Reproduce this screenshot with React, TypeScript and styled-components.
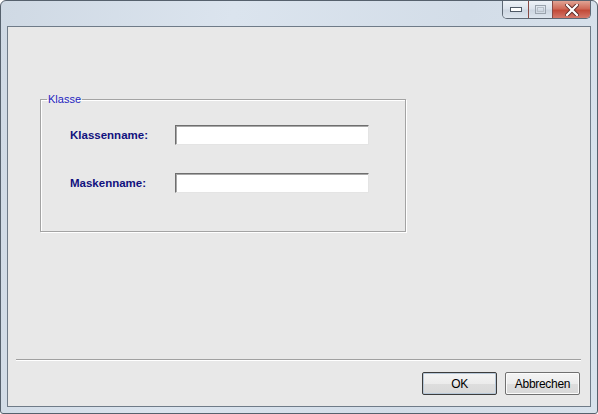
import React from "react";
import styled, { createGlobalStyle } from "styled-components";

const Global = createGlobalStyle`
  html, body { margin: 0; padding: 0; background: #ffffff; }
  body { font-family: "Liberation Sans", Arial, sans-serif; }
  * { box-sizing: border-box; }
`;

const Window = styled.div`
  width: 598px;
  height: 414px;
  border: 1px solid #56616d;
  border-radius: 6px 6px 3px 3px;
  background: linear-gradient(100deg, #cfd9e4 0%, #dbe4ee 35%, #d3dde8 70%, #d8e2ec 100%);
  padding: 0 6px 6px 6px;
  display: flex;
  flex-direction: column;
  overflow: hidden;
`;

const TitleBar = styled.div`
  height: 25px;
  display: flex;
  justify-content: flex-end;
  align-items: flex-start;
`;

const CaptionGroup = styled.div`
  display: flex;
  height: 18px;
  border: 1px solid #5e6874;
  border-top: none;
  border-radius: 0 0 5px 5px;
  overflow: hidden;
`;

const CaptionButton = styled.div<{ $close?: boolean; $w: number }>`
  width: ${(p) => p.$w}px;
  height: 100%;
  display: flex;
  align-items: center;
  justify-content: center;
  background: ${(p) =>
    p.$close
      ? "linear-gradient(180deg, #e1a494 0%, #cf6a58 45%, #c24a38 55%, #d4786a 100%)"
      : "linear-gradient(180deg, #eef2f7 0%, #dce3ec 45%, #cdd6e1 55%, #dde5ee 100%)"};
  & + & {
    border-left: 1px solid ${(p) => (p.$close ? "#8a4a44" : "#9aa6b3")};
  }
`;

const Client = styled.div`
  flex: 1;
  border: 1px solid #6f7b88;
  background: #e8e8e8;
  display: flex;
  flex-direction: column;
`;

const Content = styled.div`
  flex: 1;
  padding: 67px 0 0 32px;
`;

const GroupBox = styled.fieldset`
  margin: 0;
  width: 366px;
  height: 138px;
  border: 1px solid #a3a3a3;
  box-shadow: 1px 1px 0 #ffffff, inset 1px 1px 0 #ffffff;
  border-radius: 0;
  padding: 0;
`;

const Legend = styled.legend`
  padding: 0 1px;
  margin-left: 6px;
  font-size: 11px;
  color: #1f1fbf;
  line-height: 11px;
`;

const FormGrid = styled.div`
  display: grid;
  grid-template-columns: 105px 194px;
  row-gap: 28px;
  align-items: center;
  padding: 20px 0 0 29px;
`;

const Label = styled.label`
  font-weight: bold;
  font-size: 11.5px;
  color: #11117e;
`;

const Input = styled.div`
  height: 20px;
  background: #ffffff;
  border: 1px solid;
  border-color: #6e6e6e #e4e4e4 #e4e4e4 #6e6e6e;
  box-shadow: inset 1px 1px 0 #a8a8a8;
`;

const Footer = styled.div`
  padding: 0 10px 11px 8px;
  display: flex;
  flex-direction: column;
`;

const Separator = styled.div`
  height: 2px;
  margin-right: -1px;
  border-top: 1px solid #a0a0a0;
  border-bottom: 1px solid #ffffff;
`;

const ButtonRow = styled.div`
  margin-top: 11px;
  display: flex;
  justify-content: flex-end;
  gap: 8px;
`;

const Button = styled.div<{ $default?: boolean }>`
  width: 75px;
  height: 23px;
  display: flex;
  align-items: center;
  justify-content: center;
  font-size: 12px;
  color: #000000;
  border: 1px solid ${(p) => (p.$default ? "#3c3c3c" : "#707070")};
  border-radius: 2px;
  background: linear-gradient(180deg, #f4f4f4 0%, #ececec 50%, #dedede 52%, #d8d8d8 100%);
  box-shadow: inset 0 0 0 1px ${(p) => (p.$default ? "#b8c8d8" : "#fbfbfb")};
  letter-spacing: -0.3px;
`;

const MinIcon = () => (
  <svg width="12" height="6" viewBox="0 0 12 6">
    <rect x="0.5" y="0.5" width="11" height="4" fill="#ffffff" stroke="#4f5966" />
  </svg>
);

const MaxIcon = () => (
  <svg width="11" height="9" viewBox="0 0 11 9">
    <rect x="0.5" y="0.5" width="10" height="8" fill="none" stroke="#9aa3ad" />
    <rect x="2.5" y="2.5" width="6" height="4" fill="none" stroke="#b8c0c9" />
  </svg>
);

const CloseIcon = () => (
  <svg width="14" height="12" viewBox="0 0 14 12">
    <path
      d="M2 1 L12 11 M12 1 L2 11"
      stroke="#5a2a26"
      strokeWidth="4"
      strokeLinecap="square"
    />
    <path
      d="M2 1 L12 11 M12 1 L2 11"
      stroke="#ffffff"
      strokeWidth="2.2"
      strokeLinecap="square"
    />
  </svg>
);

export default function App() {
  return (
    <>
      <Global />
      <Window>
        <TitleBar>
          <CaptionGroup>
            <CaptionButton $w={25}>
              <MinIcon />
            </CaptionButton>
            <CaptionButton $w={24}>
              <MaxIcon />
            </CaptionButton>
            <CaptionButton $w={38} $close>
              <CloseIcon />
            </CaptionButton>
          </CaptionGroup>
        </TitleBar>
        <Client>
          <Content>
            <GroupBox>
              <Legend>Klasse</Legend>
              <FormGrid>
                <Label>Klassenname:</Label>
                <Input />
                <Label>Maskenname:</Label>
                <Input />
              </FormGrid>
            </GroupBox>
          </Content>
          <Footer>
            <Separator />
            <ButtonRow>
              <Button $default>OK</Button>
              <Button>Abbrechen</Button>
            </ButtonRow>
          </Footer>
        </Client>
      </Window>
    </>
  );
}
